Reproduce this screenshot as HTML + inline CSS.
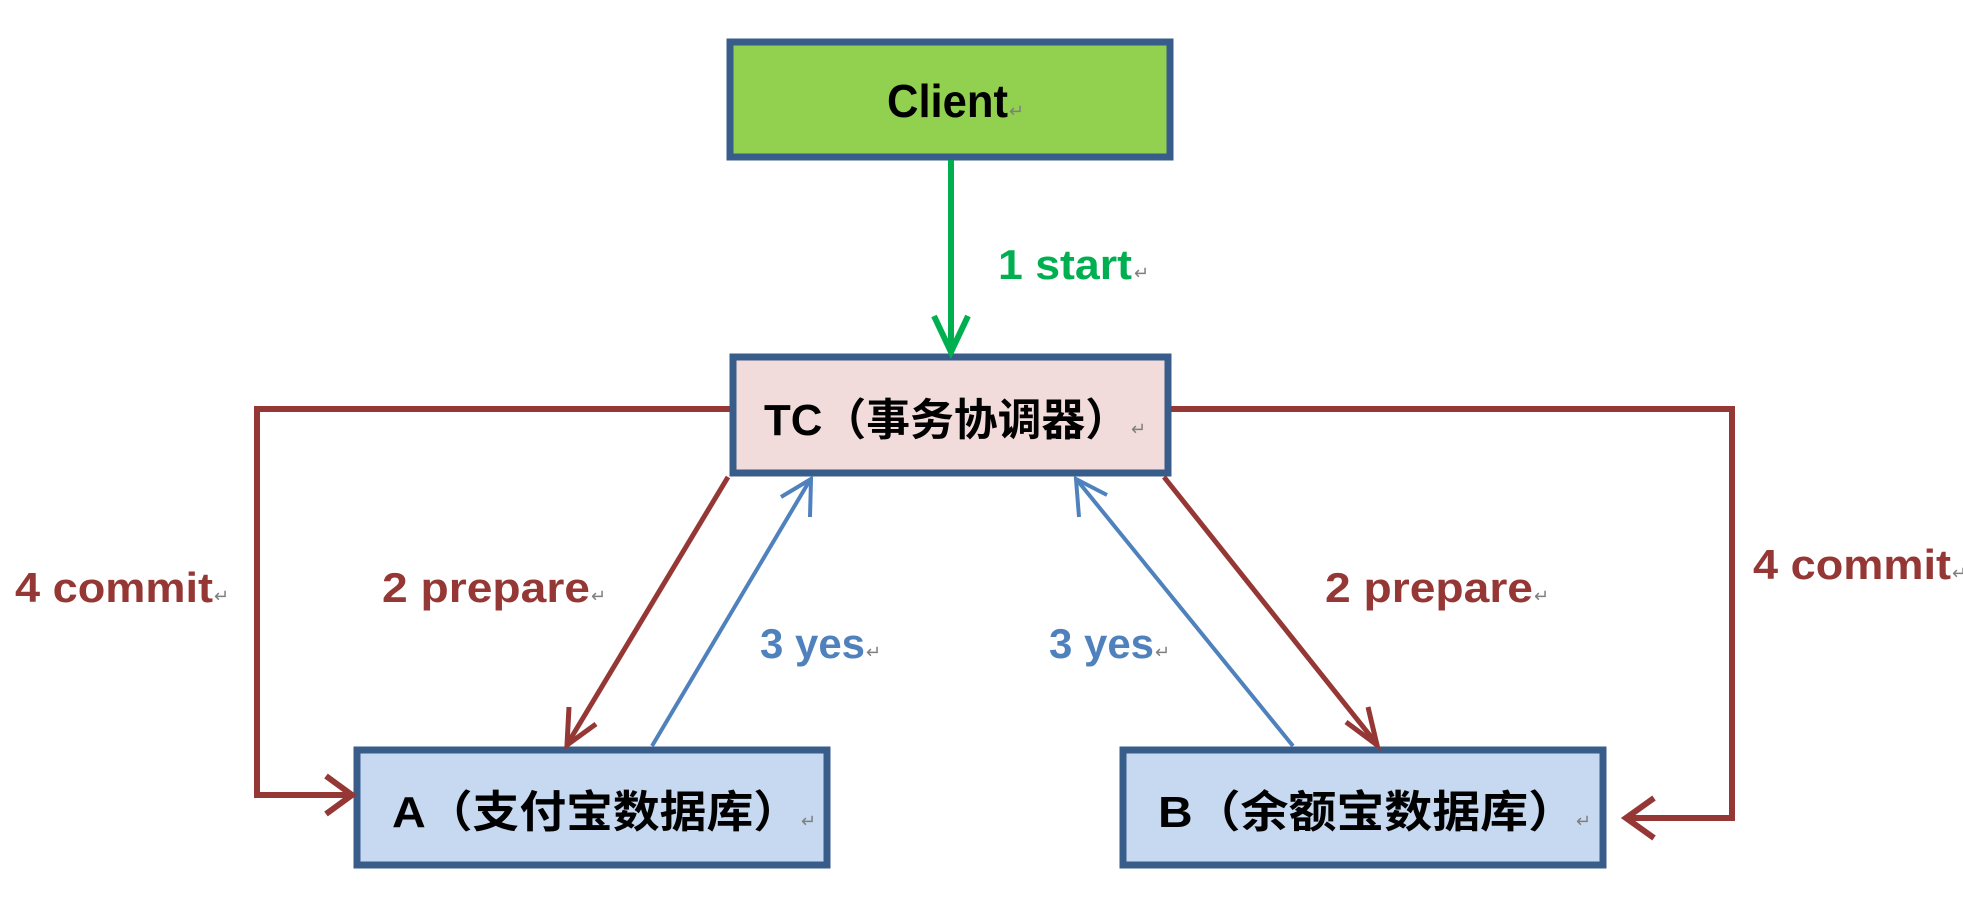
<!DOCTYPE html>
<html><head><meta charset="utf-8"><style>
html,body{margin:0;padding:0;background:#fff;}
svg{display:block;}
text{font-family:"Liberation Sans","Noto Sans CJK SC",sans-serif;font-weight:bold;}
.rt{fill:#7f7f7f;font-size:18px;font-weight:normal;}
</style></head><body>
<svg width="1963" height="903" viewBox="0 0 1963 903" xmlns="http://www.w3.org/2000/svg">
<g fill="none" stroke-linecap="butt" stroke-linejoin="miter">
<rect x="730" y="42" width="440" height="115" fill="#92d050" stroke="#385d8a" stroke-width="7"/>
<rect x="733" y="357" width="435" height="116" fill="#f2dcdb" stroke="#385d8a" stroke-width="7"/>
<rect x="357" y="750" width="470" height="115" fill="#c6d9f1" stroke="#385d8a" stroke-width="7"/>
<rect x="1123" y="750" width="480" height="115" fill="#c6d9f1" stroke="#385d8a" stroke-width="7"/>

<line x1="951" y1="160" x2="951" y2="352" stroke="#00b050" stroke-width="6"/>
<polyline points="934,316 951,352 968,316" stroke="#00b050" stroke-width="6"/>

<polyline points="730,409 257,409 257,795 350,795" stroke="#953735" stroke-width="6"/>
<polyline points="326,776 352,795 326,814" stroke="#953735" stroke-width="6"/>
<polyline points="1171,409 1732,409 1732,818 1628,818" stroke="#953735" stroke-width="6"/>
<polyline points="1654,798 1626,818 1654,838" stroke="#953735" stroke-width="6"/>

<line x1="728" y1="477" x2="568" y2="743" stroke="#953735" stroke-width="5"/>
<polyline points="569,707 567,745 596,724" stroke="#953735" stroke-width="5"/>
<line x1="652" y1="746" x2="810" y2="480" stroke="#4f81bd" stroke-width="4"/>
<polyline points="781,497 811,479 810,517" stroke="#4f81bd" stroke-width="4"/>

<line x1="1164" y1="477" x2="1376" y2="743" stroke="#953735" stroke-width="5"/>
<polyline points="1346,722 1377,745 1368,707" stroke="#953735" stroke-width="5"/>
<line x1="1293" y1="746" x2="1077" y2="480" stroke="#4f81bd" stroke-width="4"/>
<polyline points="1079,517 1076,479 1107,495" stroke="#4f81bd" stroke-width="4"/>
</g>

<text x="887" y="117" font-size="46" fill="#000" textLength="121" lengthAdjust="spacingAndGlyphs">Client</text><text x="1009" y="117" class="rt">↵</text>
<text x="998" y="279" font-size="42" fill="#00b050" textLength="134" lengthAdjust="spacingAndGlyphs">1 start</text><text x="1134" y="279" class="rt">↵</text>

<text x="764" y="435" font-size="44" fill="#000" textLength="365" lengthAdjust="spacingAndGlyphs">TC（事务协调器）</text><text x="1131" y="435" class="rt">↵</text>
<text x="392" y="827" font-size="44" fill="#000" textLength="408" lengthAdjust="spacingAndGlyphs">A（支付宝数据库）</text><text x="801" y="827" class="rt">↵</text>
<text x="1158" y="827" font-size="44" fill="#000" textLength="418" lengthAdjust="spacingAndGlyphs">B（余额宝数据库）</text><text x="1576" y="827" class="rt">↵</text>

<text x="15" y="602" font-size="42" fill="#953735" textLength="198" lengthAdjust="spacingAndGlyphs">4 commit</text><text x="214" y="602" class="rt">↵</text>
<text x="382" y="602" font-size="42" fill="#953735" textLength="208" lengthAdjust="spacingAndGlyphs">2 prepare</text><text x="591" y="602" class="rt">↵</text>
<text x="760" y="658" font-size="42" fill="#4f81bd" textLength="105" lengthAdjust="spacingAndGlyphs">3 yes</text><text x="866" y="658" class="rt">↵</text>
<text x="1049" y="658" font-size="42" fill="#4f81bd" textLength="105" lengthAdjust="spacingAndGlyphs">3 yes</text><text x="1155" y="658" class="rt">↵</text>
<text x="1325" y="602" font-size="42" fill="#953735" textLength="208" lengthAdjust="spacingAndGlyphs">2 prepare</text><text x="1534" y="602" class="rt">↵</text>
<text x="1753" y="579" font-size="42" fill="#953735" textLength="198" lengthAdjust="spacingAndGlyphs">4 commit</text><text x="1952" y="579" class="rt">↵</text>
</svg>
</body></html>
